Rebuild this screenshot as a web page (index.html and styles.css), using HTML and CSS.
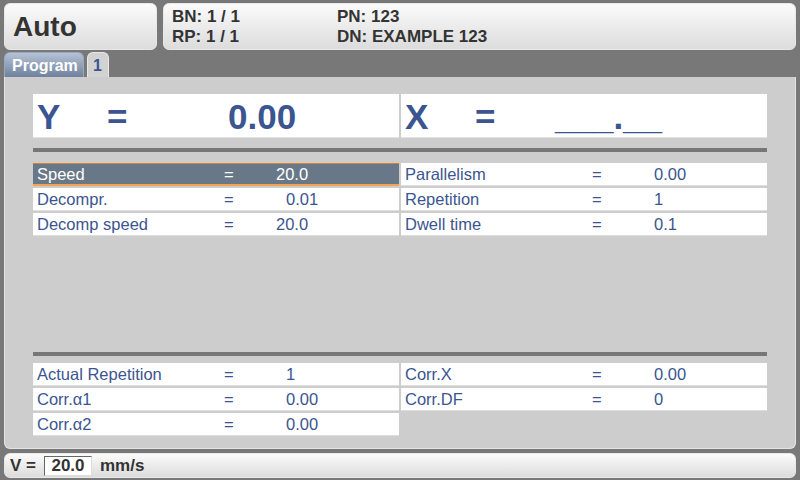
FILE: index.html
```html
<!DOCTYPE html>
<html>
<head>
<meta charset="utf-8">
<link rel="stylesheet" href="styles.css">
</head>
<body>
<div class="page">
  <header class="header">
    <div class="mode">Auto</div>
    <div class="info">
      <div class="info-col">
        <span>BN: 1 / 1</span>
        <span>RP: 1 / 1</span>
      </div>
      <div class="info-col">
        <span>PN: 123</span>
        <span>DN: EXAMPLE 123</span>
      </div>
    </div>
  </header>
  <nav class="tabs">
    <div class="tab tab--main">Program</div>
    <div class="tab tab--sub">1</div>
  </nav>
  <main class="panel">
    <div class="axes">
      <div class="axis">
        <span class="axis-name">Y</span>
        <span class="axis-eq">=</span>
        <span class="axis-val">0.00</span>
      </div>
      <div class="axis">
        <span class="axis-name">X</span>
        <span class="axis-eq axis-eq--short">=</span>
        <span class="axis-val">___.__</span>
      </div>
    </div>
    <div class="sep"></div>
    <div class="grid">
      <div class="row row--active"><span>Speed</span><span>=</span><span class="val val--wide">20.0</span></div>
      <div class="row"><span>Parallelism</span><span>=</span><span class="val">0.00</span></div>
      <div class="row"><span>Decompr.</span><span>=</span><span class="val">0.01</span></div>
      <div class="row"><span>Repetition</span><span>=</span><span class="val">1</span></div>
      <div class="row"><span>Decomp speed</span><span>=</span><span class="val val--wide">20.0</span></div>
      <div class="row"><span>Dwell time</span><span>=</span><span class="val">0.1</span></div>
    </div>
    <div class="spacer"></div>
    <div class="sep"></div>
    <div class="grid grid--tight">
      <div class="row"><span>Actual Repetition</span><span>=</span><span class="val">1</span></div>
      <div class="row"><span>Corr.X</span><span>=</span><span class="val">0.00</span></div>
      <div class="row"><span>Corr.α1</span><span>=</span><span class="val">0.00</span></div>
      <div class="row"><span>Corr.DF</span><span>=</span><span class="val">0</span></div>
      <div class="row"><span>Corr.α2</span><span>=</span><span class="val">0.00</span></div>
    </div>
  </main>
  <footer class="status">
    <span>V =</span>
    <span class="status-box">20.0</span>
    <span>mm/s</span>
  </footer>
</div>
</body>
</html>
```
FILE: styles.css
```css
* { box-sizing: border-box; }
html, body {
  margin: 0;
  padding: 0;
  width: 800px;
  height: 480px;
  overflow: hidden;
  background: #787878;
  font-family: "Liberation Sans", Arial, sans-serif;
}
.page {
  display: flex;
  flex-direction: column;
  height: 480px;
  padding: 3px 4px 2px 4px;
}
.header {
  display: flex;
  gap: 6px;
  height: 47px;
}
.mode {
  width: 153px;
  border-radius: 6px;
  border: 1px solid #e8e8e8;
  background: linear-gradient(#fbfbfb, #dcdcdc);
  font-size: 28px;
  font-weight: bold;
  color: #333;
  display: flex;
  align-items: center;
  padding: 0 0 0 8px;
}
.info {
  flex: 1;
  border-radius: 6px;
  border: 1px solid #e8e8e8;
  background: linear-gradient(#fbfbfb, #dcdcdc);
  display: flex;
  padding: 3px 0 0 8px;
  font-size: 17px;
  font-weight: bold;
  color: #333;
}
.info-col {
  display: flex;
  flex-direction: column;
  line-height: 20px;
  width: 165px;
}
.tabs {
  display: flex;
  gap: 3px;
  height: 25px;
  margin-top: 2px;
  align-items: flex-end;
}
.tab {
  height: 25px;
  border-radius: 6px 6px 0 0;
  font-size: 16px;
  font-weight: bold;
  display: flex;
  align-items: center;
  padding-top: 2px;
}
.tab--main {
  width: 80px;
  background: linear-gradient(#b4c2d6, #6f819c);
  color: #fff;
  padding-left: 7px;
  border: 1px solid #9aa8bc;
  border-bottom: none;
}
.tab--sub {
  width: 22px;
  background: #d2d2d2;
  color: #3b5590;
  padding-left: 5px;
  border: 1px solid #e8e8e8;
  border-bottom: none;
}
.panel {
  flex: 1;
  background: #cdcdcd;
  border: 1px solid #e4e4e4;
  border-top: none;
  border-radius: 0 0 6px 6px;
  padding: 17px 28px 0 28px;
  display: flex;
  flex-direction: column;
}
.axes {
  display: grid;
  grid-template-columns: 366px 366px;
  column-gap: 2px;
}
.axis {
  height: 44px;
  background: #fff;
  border-bottom: 1px solid #e2e2e2;
  display: flex;
  align-items: center;
  color: #3b5590;
  font-size: 35px;
  font-weight: bold;
  padding: 2px 0 0 4px;
}
.axis-name { width: 70px; }
.axis-eq { width: 121px; }
.axis-eq--short { width: 80px; }
.sep {
  height: 4px;
  background: #777;
  margin-top: 10px;
}
.grid {
  display: grid;
  grid-template-columns: 366px 366px;
  column-gap: 2px;
  row-gap: 2px;
  margin-top: 11px;
}
.grid--tight { margin-top: 7px; }
.row {
  height: 23px;
  background: #fff;
  border-bottom: 1px solid #dedede;
  display: grid;
  grid-template-columns: 187px 52px 1fr;
  align-items: center;
  padding-left: 4px;
  font-size: 16.5px;
  color: #3b5590;
}
.row--active {
  background: #687888;
  color: #fff;
  border-top: 1px solid #d9822a;
  border-bottom: 2px solid #f2a450;
}
.val { padding-left: 10px; }
.val--wide { padding-left: 0; }
.spacer { height: 106px; }
.status {
  margin-top: 4px;
  height: 25px;
  border-radius: 6px;
  border: 1px solid #e8e8e8;
  background: linear-gradient(#fbfbfb, #dcdcdc);
  display: flex;
  align-items: center;
  font-size: 17px;
  font-weight: bold;
  color: #333;
  padding-left: 5px;
}
.status-box {
  width: 48px;
  height: 20px;
  margin: 0 8px 0 8px;
  background: #fff;
  border-top: 1px solid #666;
  border-left: 1px solid #666;
  border-right: 1px solid #ddd;
  border-bottom: 1px solid #ddd;
  text-align: center;
  line-height: 18px;
}
```
